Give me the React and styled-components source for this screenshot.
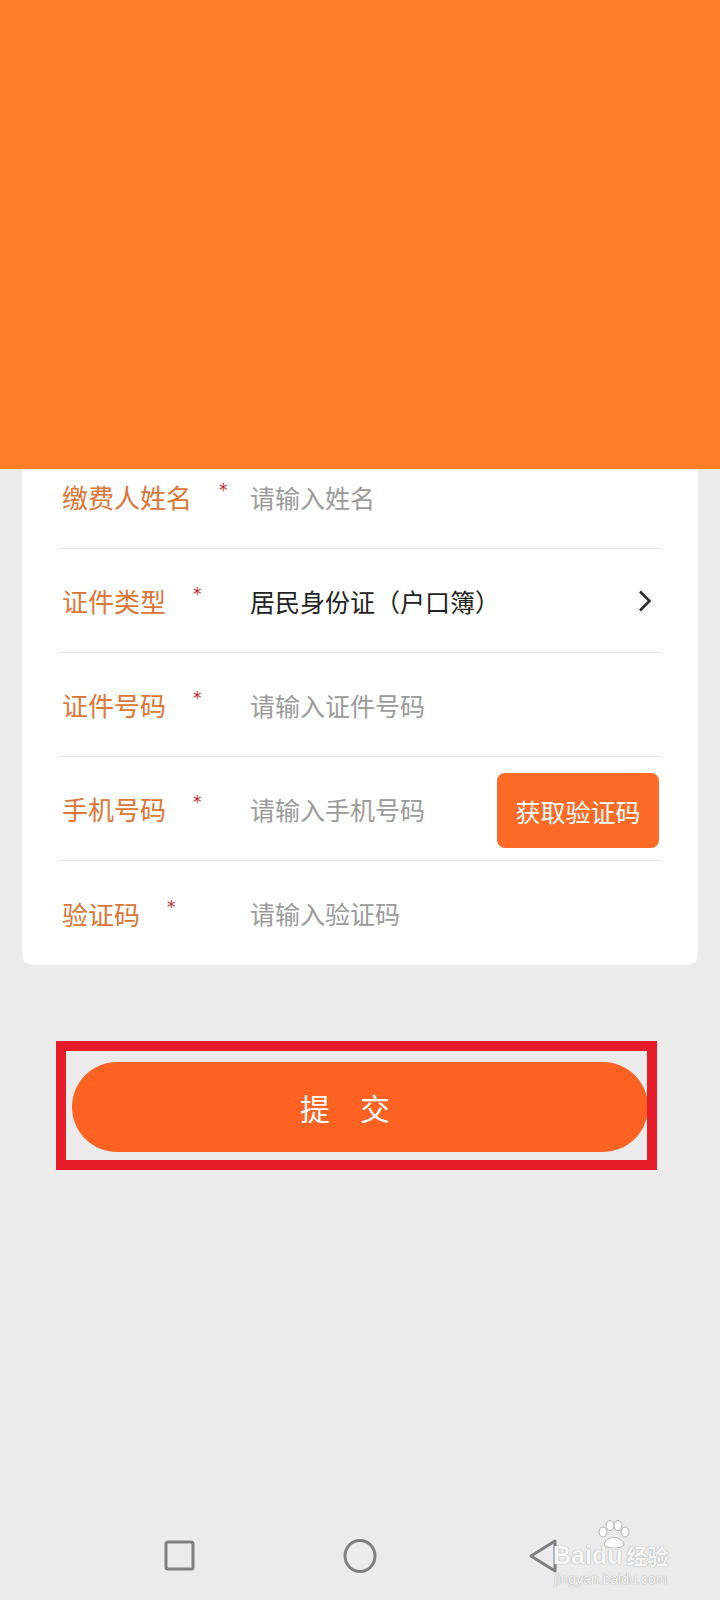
import React from 'react';
import styled, { createGlobalStyle } from 'styled-components';

const GlobalStyle = createGlobalStyle`
  html, body {
    margin: 0;
    padding: 0;
    background: #ebebeb;
  }
  body {
    font-family: "Noto Sans CJK SC", "Noto Sans", sans-serif;
  }
`;

const Page = styled.div`
  position: relative;
  width: 720px;
  height: 1600px;
  display: flex;
  flex-direction: column;
  background: #ebebeb;
  overflow: hidden;
`;

const Header = styled.div`
  position: relative;
  z-index: 1;
  height: 469px;
  background: #ff7f28;
  flex-shrink: 0;
`;

const Card = styled.div`
  margin: -24px 22px 0;
  padding: 0 39px;
  background: #fff;
  border-radius: 10px;
`;

const Row = styled.div`
  height: 104px;
  display: flex;
  align-items: center;
  box-sizing: border-box;
  border-bottom: ${(p) => (p.last ? 'none' : '1px solid #dedede')};
`;

const Label = styled.div`
  width: 189px;
  flex-shrink: 0;
  display: flex;
  align-items: center;
  padding-left: 1px;
  box-sizing: border-box;
  font-size: 26px;
  color: #dd7536;
`;

const Star = styled.span`
  margin-left: 27px;
  font-size: 17px;
  line-height: 17px;
  color: #c4282a;
  align-self: flex-start;
  margin-top: 4px;
  font-family: "DejaVu Sans", sans-serif;
`;

const Value = styled.div`
  flex: 1;
  font-size: 25px;
  color: ${(p) => (p.placeholder ? '#9a9a9a' : '#222')};
`;

const CodeButton = styled.button`
  width: 162px;
  height: 75px;
  margin-top: 4px;
  border: none;
  border-radius: 8px;
  background: #fd6a26;
  color: #fff;
  font-family: inherit;
  font-size: 25px;
  padding: 0;
`;

const Chevron = styled.svg`
  width: 16px;
  height: 24px;
  margin-right: 6px;
`;

const SubmitFrame = styled.div`
  margin: 76px 0 0 56px;
  width: 601px;
  height: 129px;
  box-sizing: border-box;
  border: 10px solid #e61c29;
  padding: 11px 0 0 6px;
  overflow: hidden;
`;

const SubmitButton = styled.button`
  width: 576px;
  height: 90px;
  border: none;
  border-radius: 45px;
  background: #fe6222;
  color: #fff;
  font-family: inherit;
  font-size: 30px;
  letter-spacing: 30px;
  padding: 0;
`;

const NavBar = styled.div`
  margin-top: auto;
  height: 88px;
  padding: 0 90px;
  display: grid;
  grid-template-columns: repeat(3, 180px);
  align-items: center;
  justify-items: center;
`;

const NavIcon = styled.svg`
  width: 36px;
  height: 36px;
  margin-left: ${(p) => p.shift || 0}px;
`;

const Watermark = styled.div`
  position: absolute;
  left: 553px;
  top: 1520px;
  display: flex;
  flex-direction: column;
  align-items: center;
  color: rgba(255, 255, 255, 0.92);
  text-shadow: 0 0 1px #a8a8a8, 0 0 1px #a8a8a8;
  pointer-events: none;
`;

const MarkTitle = styled.div`
  display: flex;
  align-items: center;
  font-family: "Liberation Sans", sans-serif;
  font-weight: bold;
  font-size: 25px;
  line-height: 26px;
`;

const MarkCn = styled.span`
  font-family: "Noto Sans CJK SC", sans-serif;
  font-size: 21px;
  margin-left: 4px;
`;

const MarkUrl = styled.div`
  font-family: "Liberation Sans", sans-serif;
  font-size: 14px;
  line-height: 16px;
  margin-top: 3px;
`;

const Paw = styled.svg`
  position: absolute;
  left: 42px;
  top: 0;
  width: 38px;
  height: 28px;
`;

const MarkBody = styled.div`
  padding-top: 22px;
  display: flex;
  flex-direction: column;
  align-items: center;
`;

const fields = [
  { label: '缴费人姓名', value: '请输入姓名', placeholder: true },
  { label: '证件类型', value: '居民身份证（户口簿）', arrow: true },
  { label: '证件号码', value: '请输入证件号码', placeholder: true },
  { label: '手机号码', value: '请输入手机号码', placeholder: true, code: true },
  { label: '验证码', value: '请输入验证码', placeholder: true },
];

export default function App() {
  return (
    <Page>
      <GlobalStyle />
      <Header />
      <Card>
        {fields.map((f, i) => (
          <Row key={f.label} last={i === fields.length - 1}>
            <Label>
              {f.label}
              <Star>*</Star>
            </Label>
            <Value placeholder={f.placeholder ? 1 : 0}>{f.value}</Value>
            {f.code && <CodeButton>获取验证码</CodeButton>}
            {f.arrow && (
              <Chevron viewBox="0 0 16 24">
                <path d="M3 2.5 L12.5 12 L3 21.5" fill="none" stroke="#2b2b2b" strokeWidth="2.6" />
              </Chevron>
            )}
          </Row>
        ))}
      </Card>
      <SubmitFrame>
        <SubmitButton>提交</SubmitButton>
      </SubmitFrame>
      <NavBar>
        <NavIcon viewBox="0 0 36 36">
          <rect x="4" y="4" width="27" height="27" rx="2" fill="none" stroke="#7f7f7f" strokeWidth="3" />
        </NavIcon>
        <NavIcon viewBox="0 0 36 36">
          <ellipse cx="18" cy="18" rx="15" ry="15.5" fill="none" stroke="#7f7f7f" strokeWidth="3" />
        </NavIcon>
        <NavIcon viewBox="0 0 36 36" shift={10}>
          <path d="M28 3 L4 18 L28 33 Z" fill="none" stroke="#7f7f7f" strokeWidth="3" strokeLinejoin="round" />
        </NavIcon>
      </NavBar>
      <Watermark>
        <Paw viewBox="0 0 38 28">
          <g fill="rgba(255,255,255,0.92)" stroke="#a8a8a8" strokeWidth="0.9">
            <ellipse cx="8" cy="12" rx="4" ry="5" />
            <ellipse cx="15" cy="5.5" rx="4" ry="5" />
            <ellipse cx="23" cy="5.5" rx="4" ry="5" />
            <ellipse cx="30" cy="12" rx="4" ry="5" />
            <path d="M9 25 C11 15, 27 15, 29 25 C27 29, 11 29, 9 25 Z" />
          </g>
        </Paw>
        <MarkBody>
          <MarkTitle>
            Bai<span>du</span>
            <MarkCn>经验</MarkCn>
          </MarkTitle>
          <MarkUrl>jingyan.baidu.com</MarkUrl>
        </MarkBody>
      </Watermark>
    </Page>
  );
}
